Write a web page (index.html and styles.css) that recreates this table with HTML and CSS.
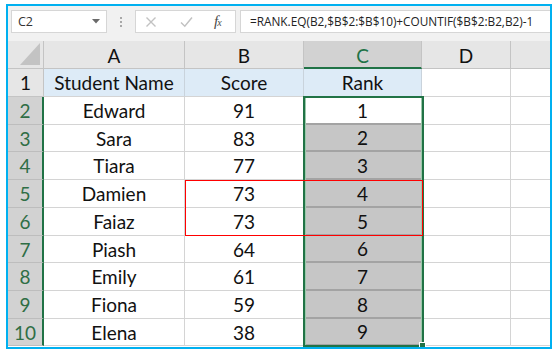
FILE: index.html
```html
<!DOCTYPE html>
<html>
<head>
<meta charset="utf-8">
<link rel="stylesheet" href="styles.css">
</head>
<body>
<div class="frame">
  <div class="toolbar">
    <div class="namebox">
      <span class="name">C2</span>
      <svg class="arrow" width="8" height="5" viewBox="0 0 8 5"><path d="M0 0H8L4 4.5Z" fill="#6a6a6a"/></svg>
    </div>
    <div class="dots"><span></span><span></span><span></span></div>
    <div class="fnbox">
      <svg class="ico" width="12" height="12" viewBox="0 0 12 12"><path d="M1.5 1.5L10.5 10.5M10.5 1.5L1.5 10.5" stroke="#c2c2c2" stroke-width="1.4" fill="none"/></svg>
      <svg class="ico" width="13" height="12" viewBox="0 0 13 12"><path d="M1 6.5L4.8 10.2L12 1.5" stroke="#c2c2c2" stroke-width="1.5" fill="none"/></svg>
      <span class="fx">f<small>x</small></span>
    </div>
    <div class="formula">=RANK.EQ(B2,$B$2:$B$10)+COUNTIF($B$2:B2,B2)-1</div>
  </div>
  <div class="sheet">
    <div class="corner"><svg width="20" height="22" viewBox="0 0 20 22"><path d="M20 0V22H0Z" fill="#c3c3c3"/></svg></div>
    <div class="ch">A</div>
    <div class="ch">B</div>
    <div class="ch sel">C</div>
    <div class="ch">D</div>
    <div class="ch last"></div>

    <div class="rh">1</div>
    <div class="c title">Student Name</div>
    <div class="c title">Score</div>
    <div class="c title">Rank</div>
    <div class="c"></div>
    <div class="c last"></div>

    <div class="rh sel">2</div><div class="c">Edward</div><div class="c">91</div><div class="c active">1</div><div class="c"></div><div class="c last"></div>
    <div class="rh sel">3</div><div class="c">Sara</div><div class="c">83</div><div class="c shade">2</div><div class="c"></div><div class="c last"></div>
    <div class="rh sel">4</div><div class="c">Tiara</div><div class="c">77</div><div class="c shade">3</div><div class="c"></div><div class="c last"></div>
    <div class="rh sel">5</div><div class="c">Damien</div><div class="c">73</div><div class="c shade">4</div><div class="c"></div><div class="c last"></div>
    <div class="rh sel">6</div><div class="c">Faiaz</div><div class="c">73</div><div class="c shade">5</div><div class="c"></div><div class="c last"></div>
    <div class="rh sel">7</div><div class="c">Piash</div><div class="c">64</div><div class="c shade">6</div><div class="c"></div><div class="c last"></div>
    <div class="rh sel">8</div><div class="c">Emily</div><div class="c">61</div><div class="c shade">7</div><div class="c"></div><div class="c last"></div>
    <div class="rh sel">9</div><div class="c">Fiona</div><div class="c">59</div><div class="c shade">8</div><div class="c"></div><div class="c last"></div>
    <div class="rh sel">10</div><div class="c">Elena</div><div class="c">38</div><div class="c shade">9</div><div class="c"></div><div class="c last"></div>

    <div class="selection"><span class="handle"></span></div>
    <div class="redbox"></div>
  </div>
</div>
</body>
</html>
```

FILE: styles.css
```css
* { box-sizing: border-box; }
html, body { margin: 0; padding: 0; background: #fff; }
body { width: 557px; height: 357px; overflow: hidden; }

.frame {
  margin: 4px 0 0 6px;
  width: 546px;
  height: 345px;
  border: 2px solid #00b0f0;
  background: #f1f1f1;
  display: flex;
  flex-direction: column;
  overflow: hidden;
}

.toolbar {
  height: 35px;
  flex: none;
  display: flex;
  align-items: flex-start;
  padding: 4px 0 0 3px;
  font-family: "Open Sans", "Noto Sans", sans-serif;
  font-size: 11.8px;
  color: #222;
}

.namebox {
  width: 96px;
  height: 23px;
  background: #fff;
  border: 1px solid #d6d6d6;
  display: flex;
  align-items: center;
  justify-content: space-between;
  padding: 0 6px 0 6px;
}
.namebox .name { color: #333; font-size: 12.5px; }

.dots {
  width: 28px;
  height: 23px;
  display: flex;
  flex-direction: column;
  align-items: center;
  justify-content: center;
  gap: 2px;
}
.dots span { width: 2px; height: 2px; background: #a8a8a8; }

.fnbox {
  width: 101px;
  height: 23px;
  background: #fff;
  border: 1px solid #d6d6d6;
  display: flex;
  align-items: center;
  padding-left: 9px;
}
.fnbox .ico { margin-right: 23px; }
.fnbox .ico + .ico { margin-right: 21px; }
.fx {
  font-family: "Liberation Serif", serif;
  font-style: italic;
  font-size: 15px;
  color: #4a4a4a;
  letter-spacing: -1px;
}
.fx small { font-size: 10px; }

.formula {
  flex: 1;
  margin-left: 4px;
  height: 23px;
  background: #fff;
  border: 1px solid #d6d6d6;
  border-right: none;
  padding-left: 9px;
  line-height: 21px;
  white-space: nowrap;
  overflow: hidden;
}

.sheet {
  position: relative;
  flex: 1;
  display: grid;
  grid-template-columns: 36px 141px 119px 118px 89px 1fr;
  grid-template-rows: 28px 28px 28px 27px 28px 28px 28px 27px 28px 28px 27px 28px;
  font-family: "Lato", "Noto Sans", sans-serif;
  font-size: 19px;
  color: #111;
  background: #fff;
}

.corner {
  background: #e6e6e6;
  border-right: 1px solid #c4c4c4;
  border-bottom: 1px solid #c4c4c4;
  display: flex;
  align-items: flex-end;
  justify-content: flex-end;
  padding: 0 3px 3px 0;
}

.ch {
  background: #e6e6e6;
  border-right: 1px solid #c4c4c4;
  border-bottom: 1px solid #c4c4c4;
  display: flex;
  align-items: center;
  justify-content: center;
  padding-top: 2px;
}
.ch.sel {
  background: #d2d2d2;
  color: #217346;
  border-bottom: 2px solid #217346;
}
.ch.last, .c.last { border-right: none; }

.rh {
  background: #e6e6e6;
  border-right: 1px solid #c4c4c4;
  border-bottom: 1px solid #c4c4c4;
  display: flex;
  align-items: center;
  justify-content: center;
}
.rh.sel {
  background: #d2d2d2;
  color: #2f6e45;
  border-right: 2px solid #217346;
  border-bottom-color: #bdbdbd;
}

.c {
  border-right: 1px solid #d4d4d4;
  border-bottom: 1px solid #d4d4d4;
  display: flex;
  align-items: center;
  justify-content: center;
  white-space: nowrap;
}
.c.title { background: #ddebf7; border-right-color: #c9d3dc; }
.c.shade { background: #c6c6c6; border-bottom: 2px solid #a3a3a3; }
.c.active { background: #fff; border-bottom: 2px solid #a3a3a3; }

.selection {
  position: absolute;
  left: 295px;
  top: 55px;
  width: 121px;
  height: 251px;
  border: 2px solid #217346;
  box-shadow: inset 1px 0 0 #9cc9ab, inset -1px 0 0 #9cc9ab;
  pointer-events: none;
}
.handle {
  position: absolute;
  right: -4px;
  bottom: -4px;
  width: 5px;
  height: 5px;
  background: #217346;
  border: 1px solid #fff;
  box-sizing: content-box;
}

.redbox {
  position: absolute;
  left: 177px;
  top: 139px;
  width: 238px;
  height: 56px;
  border: 1px solid #ff0000;
  pointer-events: none;
}
```
